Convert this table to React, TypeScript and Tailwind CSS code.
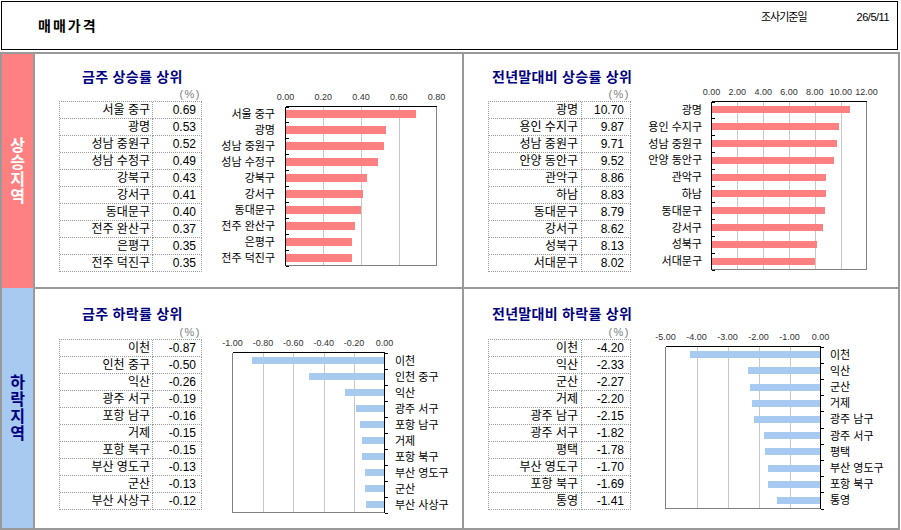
type Item = { name: string; value: number };

type ChartCfg = {
  width: number;
  height: number;
  left: number;
  right: number;
  top: number;
  bottom: number;
  axisY: number;
  labelX: number;
  barH: number;
  min: number;
  max: number;
  step: number;
  color: string;
};

const riseWeek: Item[] = [
  { name: '서울 중구', value: 0.69 },
  { name: '광명', value: 0.53 },
  { name: '성남 중원구', value: 0.52 },
  { name: '성남 수정구', value: 0.49 },
  { name: '강북구', value: 0.43 },
  { name: '강서구', value: 0.41 },
  { name: '동대문구', value: 0.4 },
  { name: '전주 완산구', value: 0.37 },
  { name: '은평구', value: 0.35 },
  { name: '전주 덕진구', value: 0.35 },
];

const riseYear: Item[] = [
  { name: '광명', value: 10.7 },
  { name: '용인 수지구', value: 9.87 },
  { name: '성남 중원구', value: 9.71 },
  { name: '안양 동안구', value: 9.52 },
  { name: '관악구', value: 8.86 },
  { name: '하남', value: 8.83 },
  { name: '동대문구', value: 8.79 },
  { name: '강서구', value: 8.62 },
  { name: '성북구', value: 8.13 },
  { name: '서대문구', value: 8.02 },
];

const fallWeek: Item[] = [
  { name: '이천', value: -0.87 },
  { name: '인천 중구', value: -0.5 },
  { name: '익산', value: -0.26 },
  { name: '광주 서구', value: -0.19 },
  { name: '포항 남구', value: -0.16 },
  { name: '거제', value: -0.15 },
  { name: '포항 북구', value: -0.15 },
  { name: '부산 영도구', value: -0.13 },
  { name: '군산', value: -0.13 },
  { name: '부산 사상구', value: -0.12 },
];

const fallYear: Item[] = [
  { name: '이천', value: -4.2 },
  { name: '익산', value: -2.33 },
  { name: '군산', value: -2.27 },
  { name: '거제', value: -2.2 },
  { name: '광주 남구', value: -2.15 },
  { name: '광주 서구', value: -1.82 },
  { name: '평택', value: -1.78 },
  { name: '부산 영도구', value: -1.7 },
  { name: '포항 북구', value: -1.69 },
  { name: '통영', value: -1.41 },
];

function BarChart({ items, cfg }: { items: Item[]; cfg: ChartCfg }) {
  const { left: L, right: R, top: T, bottom: B } = cfg;
  const negative = cfg.max <= 0;
  const span = cfg.max - cfg.min;
  const band = (B - T) / items.length;
  const xOf = (v: number) => L + ((v - cfg.min) / span) * (R - L);
  const steps: number[] = [];
  for (let v = cfg.min; v <= cfg.max + 1e-9; v += cfg.step) steps.push(Math.round(v * 100) / 100);
  const catX = negative ? R : L;

  return (
    <svg width={cfg.width} height={cfg.height} className="block shrink-0">
      {steps.map((v) => (
        <text key={'a' + v} x={xOf(v)} y={cfg.axisY + 3} fontSize={9} fill="#333" textAnchor="middle">
          {v.toFixed(2)}
        </text>
      ))}
      {steps.slice(1, -1).map((v) => (
        <line key={'g' + v} x1={Math.round(xOf(v)) + 0.5} x2={Math.round(xOf(v)) + 0.5} y1={T} y2={B} stroke="#c8c8c8" shapeRendering="crispEdges" />
      ))}
      {items.map((it, i) => {
        const cy = T + band * (i + 0.5);
        const x0 = negative ? xOf(it.value) : L;
        const x1 = negative ? R : xOf(it.value);
        return (
          <g key={it.name + i}>
            <rect x={x0} y={cy - cfg.barH / 2} width={x1 - x0} height={cfg.barH} fill={cfg.color} shapeRendering="crispEdges" />
            <text x={cfg.labelX} y={cy + 4} fontSize={11} fill="#000" textAnchor={negative ? 'start' : 'end'}>
              {it.name}
            </text>
          </g>
        );
      })}
      {/* plot border */}
      <line x1={L} x2={R} y1={B} y2={B} stroke="#808080" shapeRendering="crispEdges" />
      <line x1={negative ? L : R} x2={negative ? L : R} y1={T} y2={B} stroke="#808080" shapeRendering="crispEdges" />
      {/* axes */}
      <line x1={L} x2={R} y1={T} y2={T} stroke="#000" shapeRendering="crispEdges" />
      <line x1={catX} x2={catX} y1={T} y2={B} stroke="#000" shapeRendering="crispEdges" />
      {Array.from({ length: items.length + 1 }).map((_, i) => {
        const y = Math.round(T + band * i) + 0.5;
        return <line key={'t' + i} x1={catX} x2={catX + 3} y1={y} y2={y} stroke="#000" shapeRendering="crispEdges" />;
      })}
    </svg>
  );
}

function DataTable({ items, wide }: { items: Item[]; wide?: boolean }) {
  return (
    <div className="border-t border-l border-dotted border-[#9a9a9a] w-[143px]">
      {items.map((it, i) => (
        <div key={i} className="flex h-[17px]">
          <div
            className={`w-[93px] h-[17px] border-r border-b border-dotted border-[#9a9a9a] text-right text-[12px] leading-[15px] pt-px ${
              wide ? 'pr-[3px]' : 'pr-[2px]'
            }`}
          >
            {it.name}
          </div>
          <div
            className={`w-[49px] h-[17px] border-r border-b border-dotted border-[#9a9a9a] text-right text-[12px] leading-[15px] pt-px ${
              wide ? 'pr-[6px]' : 'pr-[5px]'
            }`}
          >
            {it.value.toFixed(2)}
          </div>
        </div>
      ))}
    </div>
  );
}

function Panel({
  title,
  items,
  cfg,
  right,
  bottom,
}: {
  title: string;
  items: Item[];
  cfg: ChartCfg;
  right?: boolean;
  bottom?: boolean;
}) {
  return (
    <div className="flex h-full">
      <div className={`ml-[24px] w-[143px] shrink-0 ${bottom ? 'pt-[17px]' : 'pt-[15px]'}`}>
        <div
          className={`h-[16px] leading-[16px] text-[14px] font-bold text-[#000080] whitespace-nowrap tracking-[0.3px] ${
            right ? 'ml-[4px]' : 'ml-[23px]'
          }`}
        >
          {title}
        </div>
        <div
          className={`h-[13px] leading-[13px] text-[11px] text-[#808080] text-right pr-[1px] tracking-[1.5px] ${
            bottom ? 'mt-[4px]' : 'mt-[3px]'
          }`}
        >
          (%)
        </div>
        <DataTable items={items} wide={right} />
      </div>
      <BarChart items={items} cfg={cfg} />
    </div>
  );
}

const pink = '#ff8080';
const blue = '#a6caf0';

const cfgTL: ChartCfg = { width: 260, height: 233, left: 83.5, right: 234.5, top: 52.5, bottom: 211.5, axisY: 43, labelX: 73, barH: 8, min: 0, max: 0.8, step: 0.2, color: pink };
const cfgTR: ChartCfg = { width: 267, height: 233, left: 80.5, right: 235.5, top: 47.5, bottom: 215.5, axisY: 38, labelX: 71, barH: 7, min: 0, max: 12, step: 2, color: pink };
const cfgBL: ChartCfg = { width: 260, height: 239, left: 30.5, right: 182.5, top: 63.5, bottom: 223.5, axisY: 54, labelX: 193, barH: 7, min: -1, max: 0, step: 0.2, color: blue };
const cfgBR: ChartCfg = { width: 267, height: 239, left: 34.5, right: 189.5, top: 57.5, bottom: 219.5, axisY: 48, labelX: 199, barH: 7, min: -5, max: 0, step: 1, color: blue };

function SideLabel({ text, className }: { text: string; className: string }) {
  return (
    <div className={`flex flex-col items-center justify-center ${className}`}>
      {text.split('').map((ch, i) => (
        <span key={i} className="text-[16px] leading-[17px] font-bold">
          {ch}
        </span>
      ))}
    </div>
  );
}

export default function App() {
  return (
    <div className="w-[901px] h-[530px] bg-white overflow-hidden text-black font-['Liberation_Sans','Noto_Sans_CJK_KR',sans-serif]">
      <div className="ml-px mt-px w-[897px] h-[49px] border border-black flex justify-between">
        <div className="mt-[16px] ml-[36px] text-[14px] leading-[16px] font-bold tracking-[2px]">매매가격</div>
        <div className="mt-[9px] mr-[8px] text-[11px] leading-[13px] flex">
          <span className="tracking-[-1px]">조사기준일</span>
          <span className="ml-[50px] tracking-[-0.5px]">26/5/11</span>
        </div>
      </div>
      <div className="mt-[2px] w-[900px] h-[478px] border-2 border-[#999999] flex">
        <div className="w-[33px] shrink-0 border-r-2 border-[#999999] flex flex-col">
          <SideLabel text="상승지역" className="h-[234px] bg-[#ff8080] text-white" />
          <SideLabel text="하락지역" className="h-[240px] bg-[#a6caf0] text-[#000080]" />
        </div>
        <div className="flex-1 flex flex-col">
          <div className="h-[235px] border-b-2 border-[#999999] flex">
            <div className="w-[429px] border-r-2 border-[#999999]">
              <Panel title="금주 상승률 상위" items={riseWeek} cfg={cfgTL} />
            </div>
            <div className="flex-1">
              <Panel title="전년말대비 상승률 상위" items={riseYear} cfg={cfgTR} right />
            </div>
          </div>
          <div className="flex-1 flex">
            <div className="w-[429px] border-r-2 border-[#999999]">
              <Panel title="금주 하락률 상위" items={fallWeek} cfg={cfgBL} bottom />
            </div>
            <div className="flex-1">
              <Panel title="전년말대비 하락률 상위" items={fallYear} cfg={cfgBR} right bottom />
            </div>
          </div>
        </div>
      </div>
    </div>
  );
}
